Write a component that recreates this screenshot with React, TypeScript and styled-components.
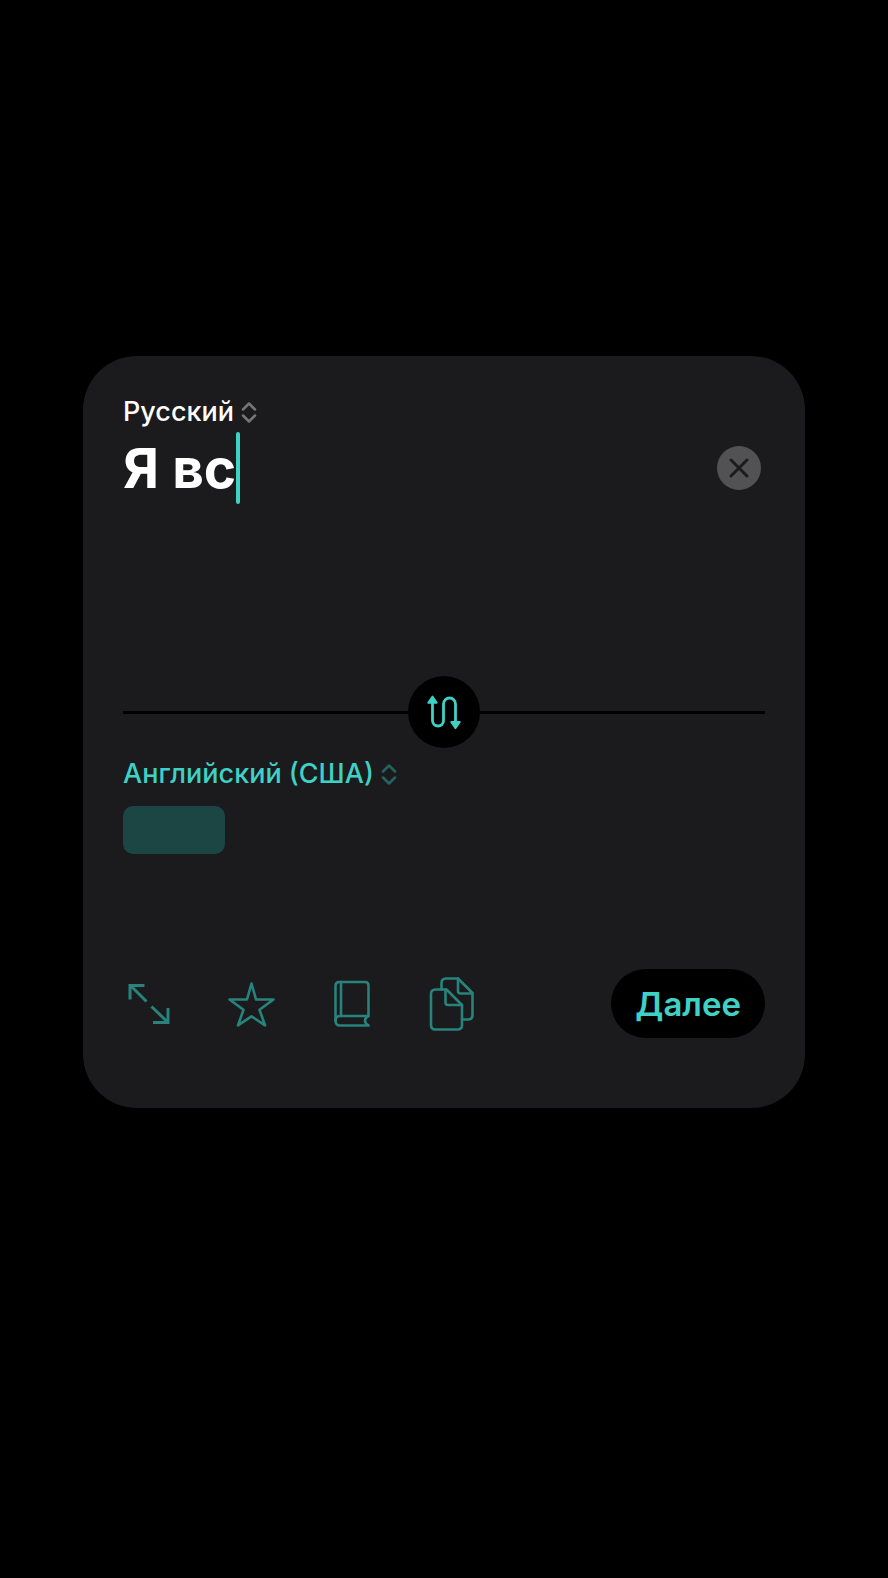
import React, { useRef, useState } from "react";
import styled, { createGlobalStyle, ThemeProvider } from "styled-components";

const theme = {
  colors: {
    background: "#000000",
    card: "#1b1b1d",
    text: "#ffffff",
    muted: "#757577",
    clear: "#525254",
    accent: "#3fd0c6",
    accentDim: "#27837b",
    accentFaint: "#25635e",
    skeleton: "#1b4644",
  },
  font: `Inter, "Liberation Sans", sans-serif`,
};

const sourceLanguages = ["Русский", "Английский (США)"];
const targetLanguages = ["Английский (США)", "Русский"];

interface LanguagePickerProps {
  label: string;
  value: string;
  options: string[];
  color: string;
  arrowColor: string;
  onChange: (value: string) => void;
}

const LanguagePicker = ({
  label,
  value,
  options,
  color,
  arrowColor,
  onChange,
}: LanguagePickerProps) => (
  <PickerWrapper>
    <LanguageSelect
      aria-label={label}
      value={value}
      $color={color}
      onChange={(e) => onChange(e.target.value)}
    >
      {options.map((option) => (
        <option key={option}>{option}</option>
      ))}
    </LanguageSelect>
    <PickerArrows viewBox="0 0 16 22" $color={arrowColor} aria-hidden="true">
      <path d="M2 8.5L8 2.5L14 8.5M2 14.5L8 20.5L14 14.5" />
    </PickerArrows>
  </PickerWrapper>
);

const ExpandIcon = () => (
  <ToolIcon viewBox="0 0 52 57">
    <ArrowPath d="M21.5 10.5H7V24.5M7.5 10.5L23.5 26.5" />
    <ArrowPath d="M30 47.5H45V33M44.5 47L28.5 31.5" />
  </ToolIcon>
);

const StarIcon = () => (
  <ToolIcon viewBox="0 0 52 57">
    <path d="M27.5 8.5L32 24.5H49.5L35.5 34.8L41 50.3L27.5 41.3L14 50.3L19.5 34.8L5.5 24.5H23Z" />
  </ToolIcon>
);

const BookIcon = () => (
  <ToolIcon viewBox="0 0 52 57">
    <path d="M43.5 41V10.5Q43.5 7 40 7H14.5Q10.5 7 10.5 11V46" />
    <path d="M43.5 50.5H15Q10.5 50.5 10.5 45.8Q10.5 41 15 41H43.5Q40 42.5 40 45.5Q40 48.5 43.5 50.5Z" />
    <path d="M16 7V41" />
  </ToolIcon>
);

const CopyIcon = () => (
  <ToolIcon viewBox="0 0 52 57">
    <path d="M19.5 14.5H9.5Q5 14.5 5 19V50Q5 54.5 9.5 54.5H31.5Q36 54.5 36 50V30L20.5 14.5Z" />
    <path d="M19.5 14.5V27.5Q19.5 30 22 30H36" />
    <path d="M15.5 14.5V8Q15.5 3.5 20 3.5H32L46.5 18V40Q46.5 44.5 42 44.5H36" />
    <path d="M32 3.5V16Q32 18.5 34.5 18.5H46.5" />
  </ToolIcon>
);

const tools = [
  { label: "Развернуть", Icon: ExpandIcon },
  { label: "В избранное", Icon: StarIcon },
  { label: "Словарь", Icon: BookIcon },
  { label: "Скопировать", Icon: CopyIcon },
];

const App = () => {
  const inputRef = useRef<HTMLInputElement | null>(null);
  const [text, setText] = useState("Я вс");
  const [source, setSource] = useState(sourceLanguages[0]);
  const [target, setTarget] = useState(targetLanguages[0]);

  const handleClear = () => {
    setText("");
    inputRef.current?.focus();
  };

  const handleSwap = () => {
    setSource(target);
    setTarget(source);
  };

  return (
    <ThemeProvider theme={theme}>
      <GlobalStyle />
      <Page>
        <Card>
          <LanguagePicker
            label="Исходный язык"
            value={source}
            options={sourceLanguages}
            color={theme.colors.text}
            arrowColor={theme.colors.muted}
            onChange={setSource}
          />
          <SourceArea onClick={() => inputRef.current?.focus()}>
            <InputRow>
              <SourceInput
                ref={inputRef}
                aria-label="Текст для перевода"
                value={text}
                onChange={(e) => setText(e.target.value)}
              />
              <Caret />
            </InputRow>
            <ClearButton aria-label="Очистить" onClick={handleClear}>
              <svg width="44" height="44" viewBox="0 0 44 44">
                <path d="M14 14L30 30M30 14L14 30" />
              </svg>
            </ClearButton>
          </SourceArea>
          <Divider>
            <Line />
            <SwapButton aria-label="Поменять языки" onClick={handleSwap}>
              <svg width="72" height="72" viewBox="0 0 72 72">
                <SwapPath d="M24.5 26V44.5A5.5 5.5 0 0 0 35.5 44.5V28A6 6 0 0 1 47.5 28V46" />
                <SwapHead d="M24.5 20.5L28.8 26.8H20.2Z" />
                <SwapHead d="M47.5 52.3L43.2 46H51.8Z" />
              </svg>
            </SwapButton>
            <Line />
          </Divider>
          <TargetArea>
            <LanguagePicker
              label="Язык перевода"
              value={target}
              options={targetLanguages}
              color={theme.colors.accent}
              arrowColor={theme.colors.accentFaint}
              onChange={setTarget}
            />
            <Skeleton />
          </TargetArea>
          <Toolbar>
            <Tools>
              {tools.map(({ label, Icon }) => (
                <ToolButton key={label} aria-label={label}>
                  <Icon />
                </ToolButton>
              ))}
            </Tools>
            <NextButton>Далее</NextButton>
          </Toolbar>
        </Card>
      </Page>
    </ThemeProvider>
  );
};

export default App;

const GlobalStyle = createGlobalStyle`
  body {
    margin: 0;
    background: ${theme.colors.background};
    font-family: ${theme.font};
  }
  button {
    border: 0;
    padding: 0;
    background: none;
    font-family: inherit;
    cursor: pointer;
  }
  svg {
    display: block;
    fill: none;
    stroke-linecap: round;
    stroke-linejoin: round;
  }
`;

const Page = styled.main`
  display: flex;
  align-items: center;
  min-height: 100vh;
  box-sizing: border-box;
  padding: 0 83px 114px;
`;

const Card = styled.section`
  flex-grow: 1;
  min-width: 0;
  padding: 40px 40px 70px;
  border-radius: 54px;
  background: ${theme.colors.card};
`;

const PickerWrapper = styled.div`
  display: flex;
  align-items: center;
  gap: 7px;
  height: 32px;
`;

const LanguageSelect = styled.select<{ $color: string }>`
  appearance: none;
  field-sizing: content;
  border: 0;
  padding: 0;
  background: none;
  color: ${({ $color }) => $color};
  font-family: inherit;
  font-size: 27px;
  font-weight: 500;
  line-height: 32px;
  outline: none;
  cursor: pointer;
`;

const PickerArrows = styled.svg<{ $color: string }>`
  width: 16px;
  height: 22px;
  stroke: ${({ $color }) => $color};
  stroke-width: 2.5;
`;

const SourceArea = styled.div`
  display: flex;
  align-items: flex-start;
  justify-content: space-between;
  min-height: 244px;
  margin-top: 4px;
  cursor: text;
`;

const InputRow = styled.div`
  display: flex;
  min-width: 0;
`;

const SourceInput = styled.input`
  field-sizing: content;
  min-width: 0;
  height: 72px;
  border: 0;
  padding: 0;
  background: none;
  color: ${theme.colors.text};
  caret-color: transparent;
  font-family: inherit;
  font-size: 55px;
  font-weight: 700;
  outline: none;
`;

const Caret = styled.span`
  flex-shrink: 0;
  width: 4px;
  height: 72px;
  border-radius: 2px;
  background: ${theme.colors.accent};
`;

const ClearButton = styled.button`
  flex-shrink: 0;
  width: 44px;
  height: 44px;
  margin: 14px 4px 0 0;
  border-radius: 50%;
  background: ${theme.colors.clear};
  stroke: ${theme.colors.card};
  stroke-width: 3;
`;

const Divider = styled.div`
  display: flex;
  align-items: center;
`;

const Line = styled.span`
  flex-grow: 1;
  height: 3px;
  background: ${theme.colors.background};
`;

const SwapButton = styled.button`
  width: 72px;
  height: 72px;
  border-radius: 50%;
  background: ${theme.colors.background};
`;

const SwapPath = styled.path`
  stroke: ${theme.colors.accent};
  stroke-width: 2.8;
`;

const SwapHead = styled.path`
  fill: ${theme.colors.accent};
  stroke: ${theme.colors.accent};
  stroke-width: 1.8;
`;

const TargetArea = styled.div`
  display: flex;
  flex-direction: column;
  gap: 16px;
  min-height: 211px;
  padding-top: 10px;
`;

const Skeleton = styled.div`
  width: 102px;
  height: 48px;
  border-radius: 10px;
  background: ${theme.colors.skeleton};
`;

const Toolbar = styled.div`
  display: flex;
  align-items: center;
  justify-content: space-between;
`;

const Tools = styled.div`
  display: flex;
  gap: 49px;
`;

const ToolButton = styled.button`
  width: 52px;
  height: 57px;
`;

const ToolIcon = styled.svg`
  width: 52px;
  height: 57px;
  stroke: ${theme.colors.accentDim};
  stroke-width: 2.6;
`;

const ArrowPath = styled.path`
  stroke-width: 3;
  stroke-linecap: butt;
  stroke-linejoin: miter;
`;

const NextButton = styled.button`
  height: 69px;
  padding: 0 24px;
  border-radius: 35px;
  background: ${theme.colors.background};
  color: ${theme.colors.accent};
  font-size: 33px;
  font-weight: 600;
`;
